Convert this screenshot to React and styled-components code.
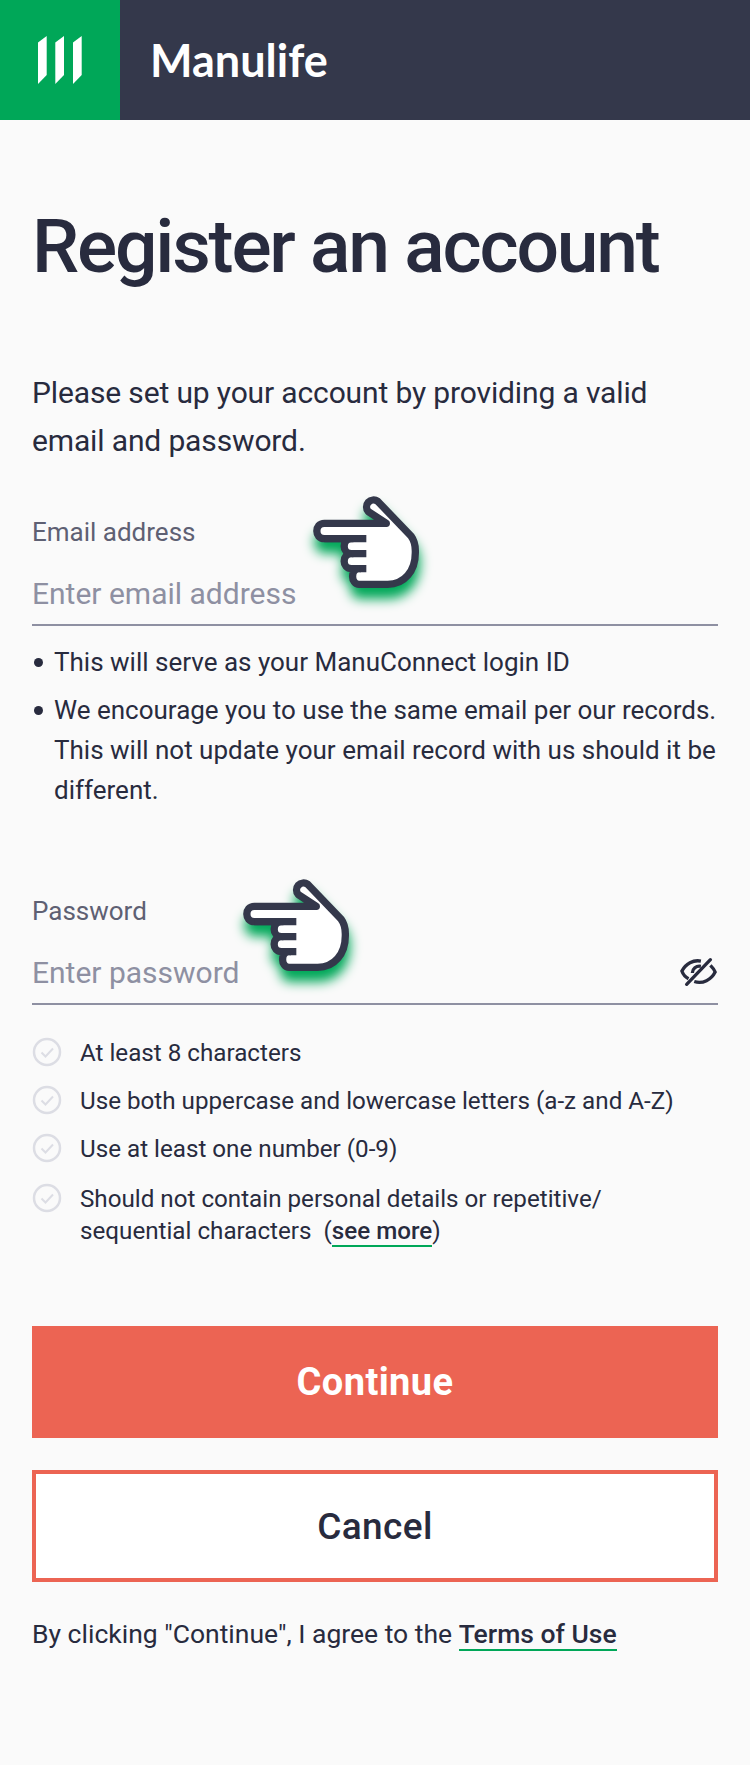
import React from 'react';
import styled, { createGlobalStyle } from 'styled-components';

const GlobalStyle = createGlobalStyle`
  html, body { margin: 0; padding: 0; background: #fafafa; }
  body { font-family: Roboto, "Liberation Sans", sans-serif; color: #282b3e; }
  * { box-sizing: border-box; }
`;

const Page = styled.div`
  width: 750px;
  height: 1765px;
  background: #fafafa;
  overflow: hidden;
`;

const Header = styled.header`
  display: flex;
  align-items: center;
  height: 120px;
  background: #34384b;
`;

const LogoBox = styled.div`
  display: flex;
  align-items: center;
  justify-content: center;
  width: 120px;
  height: 120px;
  background: #00a758;
`;

const Brand = styled.div`
  margin-left: 30px;
  color: #fff;
  font-family: Lato, sans-serif;
  font-size: 45px;
  font-weight: 700;
  line-height: 1;
`;

const Main = styled.main`
  padding: 0 32px;
`;

const Title = styled.h1`
  margin: 88px 0 0;
  font-size: 75px;
  font-weight: 500;
  letter-spacing: -2.2px;
  line-height: 76px;
  color: #282b3e;
`;

const Intro = styled.p`
  margin: 85px 0 0;
  font-size: 30px;
  letter-spacing: -0.14px;
  line-height: 48px;
`;

const Field = styled.div`
  position: relative;
  margin-top: ${p => p.$top}px;
`;

const Label = styled.div`
  font-size: 26px;
  line-height: 32px;
  color: #5e6073;
`;

const InputRow = styled.div`
  display: flex;
  align-items: center;
  justify-content: space-between;
  height: 64px;
  margin-top: 14px;
  border-bottom: 2px solid #8e90a2;
`;

const Input = styled.input`
  flex: 1;
  border: 0;
  padding: 0;
  background: transparent;
  font-family: inherit;
  font-size: 30px;
  outline: none;
  &::placeholder { color: #8e90a2; opacity: 1; }
`;

const Hand = styled.svg`
  position: absolute;
  left: ${p => p.$left}px;
  top: ${p => p.$top}px;
  width: 120px;
  height: 110px;
  filter: drop-shadow(1px 11px 6px #00a758);
`;

const Bullets = styled.ul`
  margin: 16px 0 0;
  padding: 0;
  list-style: none;
`;

const Bullet = styled.li`
  position: relative;
  padding-left: 22px;
  margin-bottom: 8px;
  font-size: 26px;
  line-height: 40px;
  &::before {
    content: '';
    position: absolute;
    left: 2px;
    top: 16px;
    width: 9px;
    height: 9px;
    border-radius: 50%;
    background: #282b3e;
  }
`;

const Rules = styled.div`
  display: flex;
  flex-direction: column;
  gap: 16px;
  margin-top: 32px;
`;

const Rule = styled.div`
  display: flex;
  align-items: flex-start;
  gap: 18px;
  margin-top: ${p => (p.$spaced ? 2 : 0)}px;
  font-size: 24.2px;
  line-height: 32px;
`;

const RuleText = styled.div`
  flex: 1;
`;

const TextLink = styled.a`
  font-weight: 500;
  color: #282b3e;
  border-bottom: 2px solid #00a758;
`;

const Button = styled.button`
  display: block;
  width: 100%;
  height: 112px;
  font-family: inherit;
  font-size: ${p => (p.$primary ? 38 : 37)}px;
  letter-spacing: 0.4px;
  font-weight: ${p => (p.$primary ? 700 : 500)};
  color: ${p => (p.$primary ? '#fff' : '#282b3e')};
  background: ${p => (p.$primary ? '#ec6453' : '#fff')};
  border: ${p => (p.$primary ? '0' : '4px solid #ec6453')};
  margin-top: ${p => p.$top}px;
`;

const Footer = styled.div`
  margin-top: 32px;
  font-size: 26.5px;
  line-height: 40px;
`;

const LogoMark = () => (
  <svg width="60" height="60" viewBox="0 0 60 60">
    <g fill="#fff">
      <path d="M8 12.500 16.700 6v39l-8.700 9z" />
      <path d="M25.300 12.500 34 6v39l-8.700 9z" />
      <path d="M43 12.500 51.700 6v39L43 54z" />
    </g>
  </svg>
);

const HandIcon = ({ left, top }) => (
  <Hand $left={left} $top={top} viewBox="0 0 360 330">
    <path
      fill="#fff"
      stroke="#34384b"
      strokeWidth="22"
      strokeLinejoin="round"
      d="M40 97H226L172 62A21 21 0 0 1 200 31L300 135C315 155 313 175 313 185C313 240 280 280 230 280H145C118 280 118 233 145 233H122C92 233 92 188 122 188C92 188 92 143 122 143H40C10 143 10 97 40 97Z"
    />
    <path
      fill="none"
      stroke="#34384b"
      strokeWidth="22"
      d="M40 143H166M122 188H166M145 233H166"
    />
  </Hand>
);

const EyeOff = () => (
  <svg width="38" height="32" viewBox="0 0 40 32" fill="none" stroke="#282b3e" strokeWidth="3.500">
    <path d="M9 23C5 21 3 18 2 15 6 7 14 3 22 4.500" />
    <path d="M15 26c9 3 18-2 22-10-1-3-3-5-5-7" />
    <path d="M13 17c0-4 4-8 9-7" />
    <path d="M7 29 32 3" strokeLinecap="round" />
  </svg>
);

const CheckCircle = () => (
  <svg width="30" height="30" viewBox="0 0 30 30" fill="none" stroke="#dcdde4">
    <circle cx="15" cy="15" r="13" strokeWidth="2.500" />
    <path d="M9.500 15.500l4 4 7.500-8" strokeWidth="2" />
  </svg>
);

const RULES = [
  'At least 8 characters',
  'Use both uppercase and lowercase letters (a-z and A-Z)',
  'Use at least one number (0-9)',
];

export default function App() {
  return (
    <Page>
      <GlobalStyle />
      <Header>
        <LogoBox><LogoMark /></LogoBox>
        <Brand>Manulife</Brand>
      </Header>
      <Main>
        <Title>Register an account</Title>
        <Intro>Please set up your account by providing a valid email and password.</Intro>

        <Field $top={51}>
          <Label>Email address</Label>
          <InputRow><Input placeholder="Enter email address" /></InputRow>
          <HandIcon left={279} top={-25} />
        </Field>
        <Bullets>
          <Bullet>This will serve as your ManuConnect login ID</Bullet>
          <Bullet>We encourage you to use the same email per our records. This will not update your email record with us should it be different.</Bullet>
        </Bullets>

        <Field $top={85}>
          <Label>Password</Label>
          <InputRow>
            <Input placeholder="Enter password" />
            <EyeOff />
          </InputRow>
          <HandIcon left={209} top={-21} />
        </Field>

        <Rules>
          {RULES.map(r => (
            <Rule key={r}><CheckCircle /><RuleText>{r}</RuleText></Rule>
          ))}
          <Rule $spaced>
            <CheckCircle />
            <RuleText>
              Should not contain personal details or repetitive/ sequential characters&nbsp; (<TextLink>see more</TextLink>)
            </RuleText>
          </Rule>
        </Rules>

        <Button $primary $top={79}>Continue</Button>
        <Button $top={32}>Cancel</Button>
        <Footer>By clicking "Continue", I agree to the <TextLink>Terms of Use</TextLink></Footer>
      </Main>
    </Page>
  );
}
